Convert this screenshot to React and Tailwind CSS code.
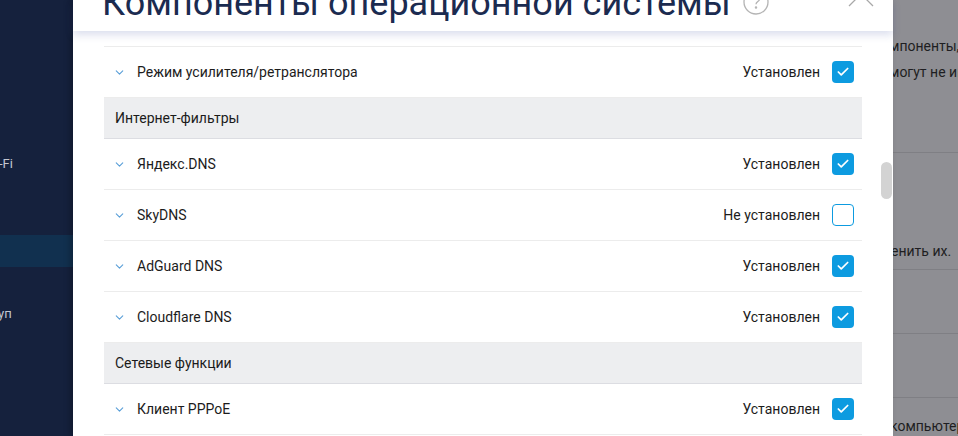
import { ChevronDown, Check } from "lucide-react";

const rows = [
  { type: "row", name: "Режим усилителя/ретранслятора", on: true },
  { type: "section", name: "Интернет-фильтры" },
  { type: "row", name: "Яндекс.DNS", on: true },
  { type: "row", name: "SkyDNS", on: false },
  { type: "row", name: "AdGuard DNS", on: true },
  { type: "row", name: "Cloudflare DNS", on: true },
  { type: "section", name: "Сетевые функции" },
  { type: "row", name: "Клиент PPPoE", on: true },
];

function Box({ on }) {
  if (on) {
    return (
      <div className="w-[22px] h-[22px] rounded-[4px] bg-[#0d9be0] flex items-center justify-center">
        <Check className="w-[14px] h-[14px] text-white" strokeWidth={3} />
      </div>
    );
  }
  return <div className="w-[22px] h-[22px] rounded-[4px] border-[1.5px] border-[#0d9be0] bg-white" />;
}

function Row({ item }) {
  if (item.type === "section") {
    return (
      <div className="h-[41px] bg-[#edeef0] border-b border-[#dcdde2] flex items-center pl-[11px] text-[14px] text-[#1b1b1b]">
        {item.name}
      </div>
    );
  }
  return (
    <div className="h-[51px] border-b border-[#ececec] flex items-center pl-[9px] pr-[8px] text-[14px] text-[#1c1c1c]">
      <ChevronDown className="w-[13px] h-[13px] text-[#5a9fd8]" strokeWidth={2} />
      <span className="ml-[11px] flex-1">{item.name}</span>
      <span className="mr-[12px]">{item.on ? "Установлен" : "Не установлен"}</span>
      <Box on={item.on} />
    </div>
  );
}

export default function App() {
  return (
    <div className="w-[958px] h-[436px] flex overflow-hidden bg-[#8e8e93]" style={{ fontFamily: "Roboto, 'Liberation Sans', sans-serif" }}>
      {/* sidebar behind overlay */}
      <div className="w-[73px] shrink-0 bg-[#15213d] text-[#c3c7d0] text-[13px] flex flex-col">
        <div className="h-[154px]" />
        <div className="h-[18px] flex items-center -ml-[1px] leading-none">-Fi</div>
        <div className="h-[63px]" />
        <div className="h-[32px] bg-[#11304f]" />
        <div className="h-[37px]" />
        <div className="h-[18px] flex items-center leading-none -ml-[2px]">уп</div>
      </div>

      {/* modal */}
      <div className="w-[820px] shrink-0 bg-white relative z-10 shadow-[-3px_0_6px_rgba(0,0,0,0.25)] flex flex-col">
        <div className="h-[31px] relative z-10 bg-white shadow-[0_4px_8px_rgba(60,80,160,0.18)] overflow-hidden">
          <div className="flex items-center -mt-[15px] pl-[29px]">
            <span className="text-[36px] leading-[36px] text-[#1b2b50] whitespace-nowrap">Компоненты операционной системы</span>
            <svg className="ml-[12px] -mt-[2px]" width="26" height="26" viewBox="0 0 26 26" fill="none" stroke="#b4b4b4" strokeWidth="1.3">
              <circle cx="13" cy="13" r="12" />
              <path d="M9.5 10.2a3.5 3.5 0 0 1 7 0c0 2.2-3.5 2.6-3.5 5" />
              <circle cx="13" cy="18.6" r="0.6" fill="#b4b4b4" />
            </svg>
          </div>
          <svg className="absolute left-[775px] -top-[19px]" width="26" height="26" viewBox="0 0 26 26" stroke="#a8a8a8" strokeWidth="1.3">
            <path d="M1 1L25 25M25 1L1 25" />
          </svg>
        </div>
        <div className="flex flex-1 min-h-0 pt-[15px]">
          <div className="ml-[31px] w-[758px] border-t border-[#ececec]">
            {rows.map((r, i) => (
              <Row key={i} item={r} />
            ))}
          </div>
          <div className="flex-1 flex justify-end pr-[1px]">
            <div className="w-[11px] h-[37px] mt-[116px] rounded-full bg-[#d3d3d3]" />
          </div>
        </div>
      </div>

      {/* page behind overlay */}
      <div className="flex-1 min-w-0 overflow-hidden text-[14px] text-[#1e1e22] whitespace-nowrap flex flex-col">
        <div className="h-[36px]" />
        <div className="-ml-[4px] leading-[20px]">мпоненты,</div>
        <div className="-ml-[4px] leading-[20px] mt-[6px]">могут не им</div>
        <div className="h-[71px]" />
        <div className="h-px bg-[#7f7f84]" />
        <div className="h-[90px]" />
        <div className="-ml-[2px] leading-[20px]">енить их.</div>
        <div className="h-[8px]" />
        <div className="h-px bg-[#7f7f84]" />
        <div className="h-[64px]" />
        <div className="h-px bg-[#7f7f84]" />
        <div className="h-[64px]" />
        <div className="h-px bg-[#7f7f84]" />
        <div className="h-[18px]" />
        <div className="-ml-[3px] leading-[20px]">компьютер</div>
      </div>
    </div>
  );
}
